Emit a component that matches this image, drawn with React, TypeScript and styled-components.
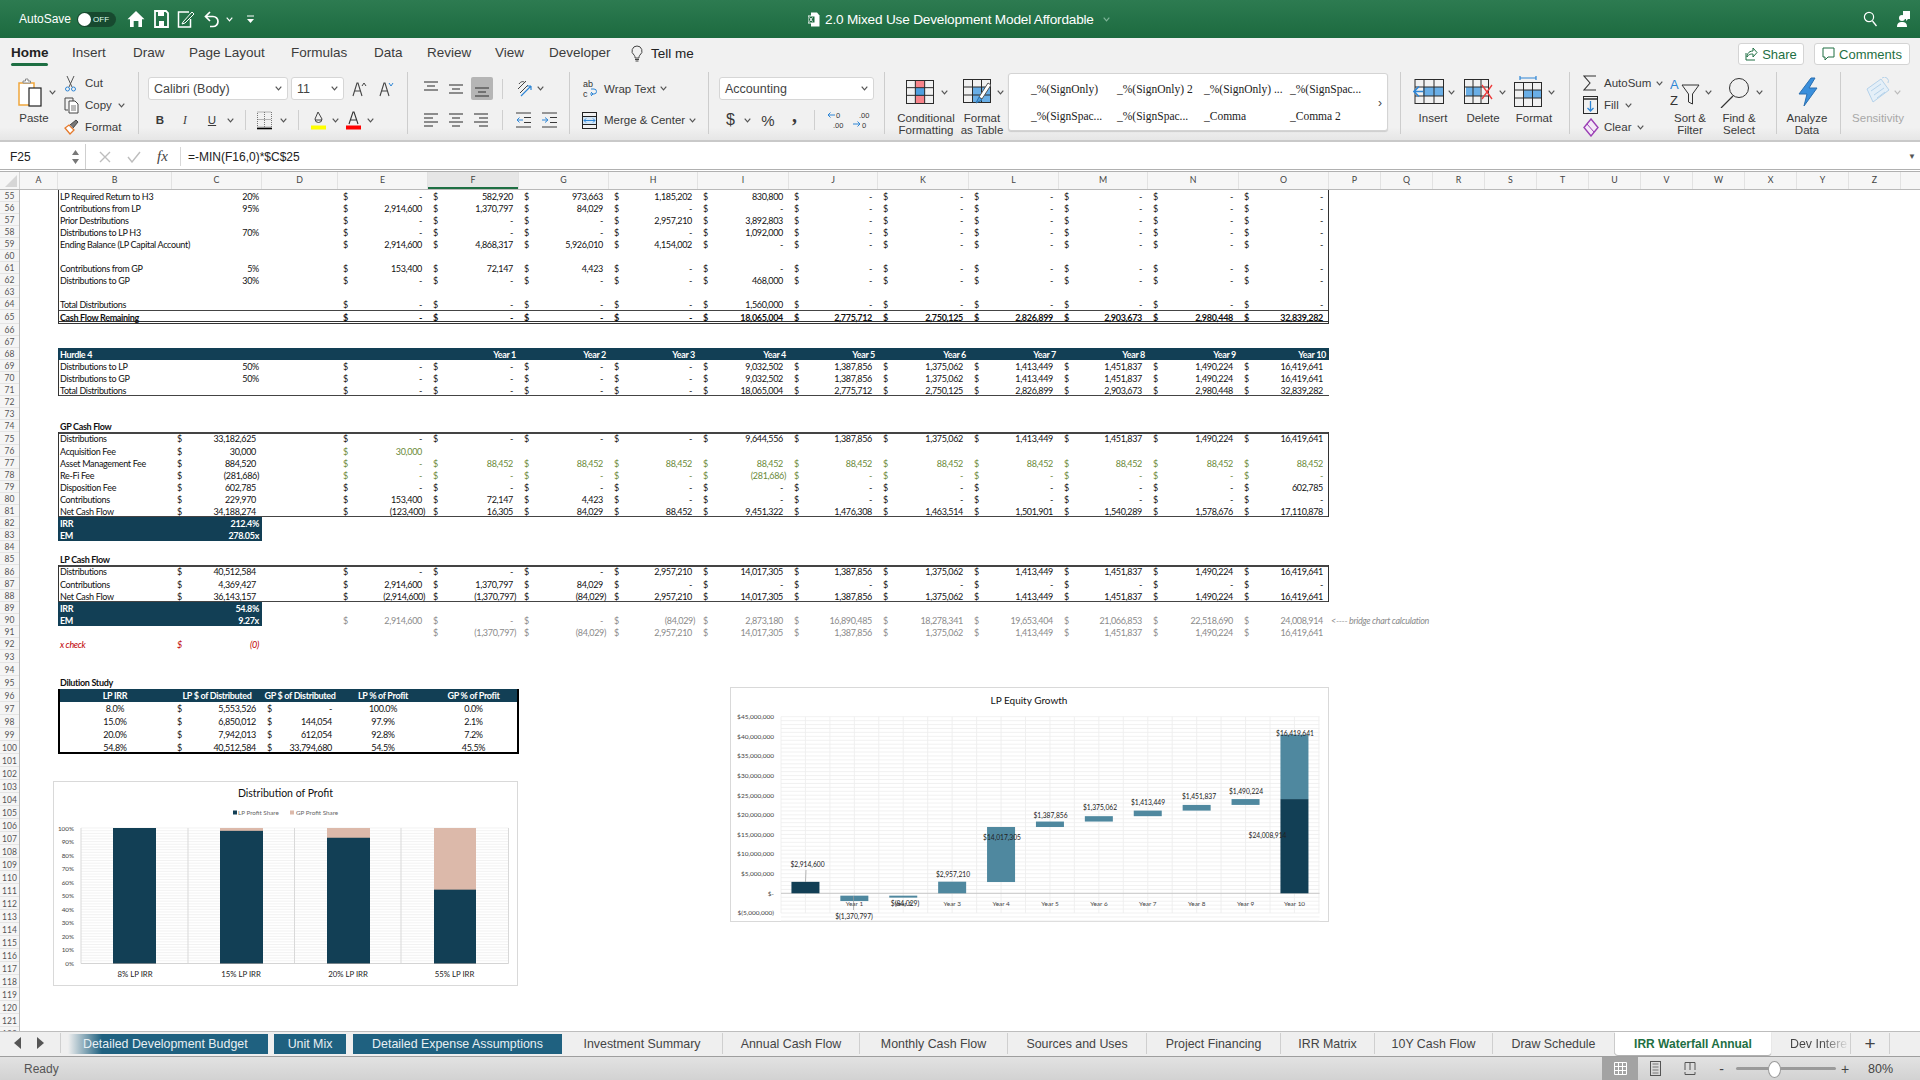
import React from 'react';
import styled, { createGlobalStyle } from 'styled-components';

const UI = '"Liberation Sans", Arial, sans-serif';
const CELL = 'Lato, "Liberation Sans", sans-serif';
const TEAL = '#123f55';
const WIDTHS = [38, 114, 90, 76, 90, 91, 90, 89, 91, 89, 91, 90, 89, 91, 90];
const ALLCOLS = WIDTHS.slice(1).map((w) => w + 'px').join(' ');
const LETTERS = 'ABCDEFGHIJKLMNOPQRSTUVWXYZ'.split('');

const Global = createGlobalStyle`
  html, body { margin: 0; padding: 0; width: 1920px; height: 1080px; overflow: hidden; background: #fff; }
  * { box-sizing: border-box; }
`;

const Page = styled.div`
  width: 1920px; height: 1080px; display: flex; flex-direction: column; overflow: hidden;
  font-family: ${UI}; color: #333; background: #fff;
`;

/* ---------- title bar ---------- */
const TitleBar = styled.div`
  height: 38px; flex: none; display: flex; align-items: center; color: #fff;
  background: linear-gradient(#2d7b51, #1c6a3f);
`;
const QuickAccess = styled.div`
  width: 808px; flex: none; display: flex; align-items: center; padding-left: 19px; font-size: 12px;
`;
const Toggle = styled.div`
  width: 39px; height: 15px; margin-left: 6px; border-radius: 8px; background: #17492f; position: relative;
  font-size: 8px; line-height: 15px; padding-left: 16px; color: #dfe;
  &::before { content: ''; position: absolute; left: 1px; top: 1px; width: 13px; height: 13px; border-radius: 50%; background: #fff; }
`;
const QuickSlot = styled.div<{ $ml: number }>`
  margin-left: ${(p) => p.$ml}px; display: flex; align-items: center;
`;
const DocTitle = styled.div`
  flex: 1; display: flex; align-items: center; gap: 5px; font-size: 13.6px; letter-spacing: -0.18px;
`;
const TitleRight = styled.div`
  display: flex; align-items: center; gap: 20px; padding-right: 9px;
`;

/* ---------- menu ---------- */
const MenuBar = styled.div`
  height: 32px; flex: none; display: flex; align-items: center; background: #f1f1f1; padding-left: 11px; font-size: 13.5px;
`;
const MenuTab = styled.div<{ $w: number; $active?: boolean }>`
  width: ${(p) => p.$w}px; flex: none; height: 100%; line-height: 30px; position: relative; white-space: nowrap;
  color: ${(p) => (p.$active ? '#222' : '#3c3c3c')}; font-weight: ${(p) => (p.$active ? 700 : 400)};
  ${(p) => p.$active && `&::after { content: ''; position: absolute; left: 0; top: 25px; width: 37px; height: 3px; border-radius: 2px; background: #1e6f43; }`}
`;
const TellMe = styled.div`
  display: flex; align-items: center; gap: 8px; height: 30px; margin-bottom: 2px; color: #222; font-weight: 500;
`;
const ShareRow = styled.div`
  margin-left: auto; display: flex; gap: 10px; padding-right: 10px;
`;
const ShareBtn = styled.div<{ $w: number }>`
  width: ${(p) => p.$w}px; height: 22px; background: #fff; border: 1px solid #d4d4d4; border-radius: 3px;
  display: flex; align-items: center; justify-content: center; gap: 4px; color: #1e6f43; font-size: 13px;
`;

/* ---------- ribbon ---------- */
const Ribbon = styled.div`
  height: 72px; flex: none; display: flex; background: linear-gradient(#f1f1f1 0%, #f1f1f1 82%, #e6e6e6 100%);
  border-bottom: 2px solid #c9c9c9;
`;
const Group = styled.div<{ $w: number; $end?: boolean }>`
  width: ${(p) => p.$w}px; height: 62px; margin-top: 2px; flex: none; display: flex;
  border-right: ${(p) => (p.$end ? 'none' : '1px solid #cdcdcd')}; font-size: 11.5px; color: #3a3a3a;
`;
const BigTool = styled.div<{ $w: number; $ml?: number }>`
  width: ${(p) => p.$w}px; margin-left: ${(p) => p.$ml ?? 0}px; flex: none; display: flex; flex-direction: column;
`;
const IconRow = styled.div<{ $pl: number }>`
  height: 40px; flex: none; padding-left: ${(p) => p.$pl}px; display: flex; align-items: center;
`;
const BigLabel = styled.div<{ $muted?: boolean }>`
  text-align: center; line-height: 12px; flex: none; white-space: nowrap; color: ${(p) => (p.$muted ? '#a8a8a8' : '#3a3a3a')};
`;
const SmallCol = styled.div<{ $ml: number; $w?: number }>`
  margin-left: ${(p) => p.$ml}px; ${(p) => p.$w && `width: ${p.$w}px;`} flex: none; display: flex; flex-direction: column;
`;
const SmallRow = styled.div`
  height: 22px; flex: none; display: flex; align-items: center; white-space: nowrap;
`;
const IconCell = styled.div<{ $w: number }>`
  width: ${(p) => p.$w}px; flex: none; display: flex; align-items: center;
`;
const Stack = styled.div<{ $pl: number }>`
  padding: 5px 0 0 ${(p) => p.$pl}px; display: flex; flex-direction: column; gap: 8px;
`;
const ToolRow = styled.div<{ $h: number }>`
  height: ${(p) => p.$h}px; flex: none; display: flex; align-items: center; white-space: nowrap;
`;
const Slot = styled.div<{ $w: number; $ml?: number; $on?: boolean }>`
  width: ${(p) => p.$w}px; margin-left: ${(p) => p.$ml ?? 0}px; flex: none; align-self: stretch;
  display: flex; align-items: center; justify-content: center; border-radius: 2px;
  ${(p) => p.$on && 'background: #b5b5b5;'}
`;
const Sep = styled.div<{ $ml: number }>`
  width: 1px; height: 20px; margin-left: ${(p) => p.$ml}px; background: #cfcfcf; flex: none;
`;
const Combo = styled.div<{ $w: number; $ml?: number }>`
  width: ${(p) => p.$w}px; height: 23px; margin-left: ${(p) => p.$ml ?? 0}px; flex: none; background: #fff;
  border: 1px solid #d6d6d6; border-radius: 3px; display: flex; align-items: center; justify-content: space-between;
  padding: 0 5px; font-size: 12.5px; color: #444;
`;
const Styles = styled.div`
  width: 380px; height: 58px; margin-top: 1px; background: #fff; border: 1px solid #d4d4d4; border-radius: 3px;
  box-shadow: 0 1px 1px #ccc; display: grid; grid-template-columns: 86px 87px 86px 1fr; grid-template-rows: 29px 26px;
  padding-left: 22px; align-items: center; position: relative; font-family: "Liberation Serif", serif; font-size: 11.5px; color: #222;
`;
const StyleNext = styled.div`
  position: absolute; right: 5px; top: 22px; font-family: ${UI}; color: #444; font-size: 12px;
`;
const DollarGlyph = styled.span`
  font-size: 16px;
`;
const PercentGlyph = styled.span`
  font-size: 15px;
`;
const CommaGlyph = styled.b`
  font-size: 20px; line-height: 10px; margin-top: -11px; font-family: "Liberation Serif", serif;
`;
const ItalicGlyph = styled.i`
  font-family: "Liberation Serif", serif;
`;

/* ---------- formula bar ---------- */
const FormulaBar = styled.div`
  height: 27px; flex: none; display: flex; align-items: center; background: #fff; font-size: 12px; color: #222; padding-top: 2px;
`;
const NameBox = styled.div`
  width: 86px; height: 100%; flex: none; display: flex; align-items: center; justify-content: space-between;
  padding: 0 6px 0 10px; border-right: 1px solid #cfcfcf;
`;
const FormulaTools = styled.div`
  width: 95px; height: 19px; flex: none; display: flex; align-items: center; gap: 16px; padding-left: 13px; border-right: 1px solid #d8d8d8;
`;
const Fx = styled.span`
  font-family: "Liberation Serif", serif; font-style: italic; font-size: 15px; color: #444;
`;
const FormulaText = styled.div`
  flex: 1; padding-left: 7px; font-size: 12px;
`;
const FormulaDrop = styled.div`
  padding-right: 4px; font-size: 8px; color: #555;
`;

/* ---------- sheet ---------- */
const Sheet = styled.div`
  height: 862px; flex: none; position: relative; overflow: hidden; border-top: 3px double #b0b0b0;
`;
const ColHeader = styled.div`
  height: 18px; display: flex; background: #f6f6f6; border-bottom: 1px solid #b9b9b9; font-family: ${CELL}; font-size: 8.8px; color: #444;
`;
const Corner = styled.div`
  width: 20px; flex: none; border-right: 1px solid #d4d4d4; position: relative;
  &::after { content: ''; position: absolute; right: 2px; bottom: 2px; border: 6px solid transparent; border-right-color: #d6d6d6; border-bottom-color: #d6d6d6; }
`;
const ColCell = styled.div<{ $w: number; $sel?: boolean }>`
  width: ${(p) => p.$w}px; flex: none; text-align: center; line-height: 16px; border-right: 1px solid #e2e2e2;
  ${(p) => p.$sel && `background: #e6e6e6; box-shadow: inset 0 -2px #1e6f43;`}
`;
const SheetRow = styled.div<{ $h: number }>`
  height: ${(p) => p.$h}px; display: flex; font-family: ${CELL}; font-size: 9px; letter-spacing: -0.33px; color: #111; white-space: nowrap;
`;
const RowNo = styled.div`
  width: 20px; flex: none; display: flex; align-items: center; justify-content: center; background: #f5f5f5; border-right: 1px solid #b9b9b9;
  box-shadow: inset 0 -1px #e4e4e4; color: #555; font-size: 8.5px; letter-spacing: 0;
`;
const Gutter = styled.div`
  width: 38px; flex: none;
`;
const rowShadow = (p: any) => {
  const s: string[] = [];
  if (p.$l) s.push('inset 1px 0 #333');
  if (p.$r) s.push('inset -1px 0 #333');
  if (p.$t === 1) s.push('inset 0 1px #444');
  if (p.$t === 2) s.push('inset 0 2px #444');
  if (p.$b === 1) s.push('inset 0 -1px #444');
  if (p.$b === 2) s.push('inset 0 -1px #333', 'inset 0 -2px #fff', 'inset 0 -3px #333');
  if (p.$bk) s.push('inset 2px 0 #000', 'inset -2px 0 #000');
  if (p.$bkb) s.push('inset 0 -2px #000');
  return s.join(', ') || 'none';
};
const Body = styled.div<any>`
  display: grid; grid-template-columns: ${(p) => p.$cols ?? ALLCOLS}; width: ${(p) => p.$width ?? 1271}px; flex: none;
  box-shadow: ${rowShadow}; ${(p) => p.$fill && `background: ${TEAL}; color: #fff; font-weight: 700;`}
`;
const CellBase = styled.div<any>`
  display: flex; align-items: center; min-width: 0; overflow: visible;
  ${(p) => p.$bold && 'font-weight: 700;'}
  ${(p) => p.$tone === 'green' && 'color: #6b8a3a;'}
  ${(p) => p.$tone === 'grey' && 'color: #8b8b8b;'}
  ${(p) => p.$tone === 'red' && 'color: #c00000; font-style: italic;'}
  ${(p) => p.$band && `background: ${TEAL}; color: #fff; font-weight: 700;`}
`;
const Label = styled(CellBase)`
  padding-left: 2px;
`;
const RightCell = styled(CellBase)`
  justify-content: flex-end; padding-right: 3px;
`;
const CenterCell = styled(CellBase)`
  justify-content: center;
`;
const Acct = styled(CellBase)`
  justify-content: space-between; padding: 0 3px 0 5px;
`;
const Amount = styled.span<{ $neg?: boolean }>`
  margin-right: ${(p) => (p.$neg ? 0 : 3)}px;
`;
const Note = styled.div`
  margin-left: 2px; display: flex; align-items: center; color: #8b8b8b; font-style: italic;
`;
const ChartFrame = styled.div<{ $x: number; $y: number; $w: number; $h: number }>`
  position: absolute; left: ${(p) => p.$x}px; top: ${(p) => p.$y}px; width: ${(p) => p.$w}px; height: ${(p) => p.$h}px;
  background: #fff; border: 1px solid #d9d9d9; font-family: ${CELL};
  svg { display: block; position: absolute; left: -1px; top: -1px; }
`;

/* ---------- tabs + status ---------- */
const TabBar = styled.div`
  height: 26px; flex: none; display: flex; background: #efefef; border-top: 1px solid #bdbdbd; border-bottom: 1px solid #9e9e9e; font-size: 12.4px; color: #444;
`;
const TabNav = styled.div`
  width: 61px; flex: none; height: 20px; margin-top: 1px; display: flex; align-items: center; gap: 16px; padding-left: 14px; border-right: 1px solid #cfcfcf;
`;
const ColorTab = styled.div<{ $w: number; $ml: number; $fade?: boolean }>`
  width: ${(p) => p.$w}px; margin: 2px 0 0 ${(p) => p.$ml}px; height: 20px; flex: none; display: flex; align-items: center; justify-content: ${(p) => (p.$fade ? 'flex-start' : 'center')}; color: #e8eff3;
  background: ${(p) => (p.$fade ? 'linear-gradient(90deg, #efefef 0, #1f6180 34px)' : '#1f6180')};
  padding-left: ${(p) => (p.$fade ? 15 : 0)}px;
`;
const PlainTab = styled.div<{ $w: number }>`
  width: ${(p) => p.$w}px; flex: none; height: 21px; margin-top: 1px; display: flex; align-items: center; justify-content: center; border-right: 1px solid #cfcfcf;
`;
const ActiveTab = styled.div<{ $w: number }>`
  width: ${(p) => p.$w}px; flex: none; height: 23px; display: flex; align-items: center; justify-content: center; background: #fff; color: #1e6f43; font-weight: 700;
  border-radius: 0 0 3px 3px; box-shadow: 0 1px 1px #aaa; font-size: 12px;
`;
const FadeTab = styled.div`
  width: 80px; flex: none; height: 21px; margin-top: 1px; display: flex; align-items: center; padding-left: 19px; border-right: 1px solid #cfcfcf;
`;
const FadeText = styled.span`
  background: linear-gradient(90deg, #444 55%, #ddd 100%); -webkit-background-clip: text; background-clip: text; color: transparent;
`;
const AddTab = styled.div`
  width: 39px; flex: none; height: 21px; margin-top: 1px; display: flex; align-items: center; justify-content: center; border-right: 1px solid #cfcfcf; font-size: 19px; color: #444;
`;
const StatusBar = styled.div`
  height: 23px; flex: none; display: flex; align-items: center; padding-left: 24px; font-size: 12px; color: #555;
  background: linear-gradient(#e2e2e2, #d2d2d2);
`;
const StatusRight = styled.div`
  margin-left: auto; height: 100%; display: flex; align-items: center;
`;
const ViewBtn = styled.div<{ $w: number; $on?: boolean }>`
  width: ${(p) => p.$w}px; height: 100%; display: flex; align-items: center; justify-content: center; ${(p) => p.$on && 'background: #a3a3a3;'}
`;
const ZoomMark = styled.div<{ $w: number }>`
  width: ${(p) => p.$w}px; text-align: center; font-size: 14px; color: #444;
`;
const Slider = styled.div`
  width: 100px; height: 3px; margin: 0 1px; background: #9a9a9a; border-radius: 2px; position: relative;
  &::after { content: ''; position: absolute; left: 32px; top: -6px; width: 11px; height: 15px; border-radius: 50%; background: #fff; border: 1px solid #999; }
`;
const Percent = styled.div`
  width: 67px; padding-left: 15px; font-size: 12.5px; color: #444;
`;

/* ---------- icons ---------- */
const B = '#2e86d6';
const K = '#2b2b2b';
const Chev = ({ ml = 4, c = '#555' }: { ml?: number; c?: string }) => (
  <svg width="7" height="5" viewBox="0 0 7 5" style={{ marginLeft: ml, flex: 'none' }}><path d="M.7.7 3.5 3.8 6.3.7" fill="none" stroke={c} strokeWidth="1.2" /></svg>
);
const Sv = ({ w, h, children }: any) => <svg width={w} height={h} viewBox={`0 0 ${w} ${h}`} fill="none" style={{ flex: 'none' }}>{children}</svg>;
const HomeI = () => <Sv w={18} h={18}><path d="M9 1 17.5 9.2H15V17h-3.6v-6H6.7v6H3V9.2H.5Z" fill="#fff" /></Sv>;
const SaveI = () => <Sv w={15} h={18}><path d="M1 1h11l2 2v14H1Z" stroke="#fff" strokeWidth="1.8" /><rect x="4" y="1" width="6" height="5" fill="#fff" /><rect x="5" y="11" width="5" height="6" fill="#fff" /></Sv>;
const EditI = () => <Sv w={18} h={18}><path d="M12 2H1.5v15h12V9" stroke="#fff" strokeWidth="1.5" /><path d="M6 12 15 2l2 2-9 9-3 1Z" fill="#1c6a3f" stroke="#fff" /></Sv>;
const UndoI = () => <Sv w={15} h={18}><path d="M6 2 1.5 6.5 6 11M1.5 6.5H9a5 5 0 0 1 0 10H6" stroke="#fff" strokeWidth="1.7" /></Sv>;
const CustomI = () => <Sv w={7} h={9}><path d="M0 1h7" stroke="#fff" /><path d="M0 4h7L3.5 8Z" fill="#fff" /></Sv>;
const DocI = () => <Sv w={12} h={15}><path d="M3 .5h6l2.5 3v11H3Z" fill="#fff" /><rect y="4" width="7" height="7" fill="#1c6a3f" stroke="#fff" /><path d="m1.5 5.5 3 4m0-4-3 4" stroke="#fff" /></Sv>;
const SearchI = () => <Sv w={14} h={16}><circle cx="6" cy="6" r="4.6" stroke="#fff" strokeWidth="1.2" /><path d="m9.5 10 4 5" stroke="#fff" strokeWidth="1.3" /></Sv>;
const PersonI = () => <Sv w={14} h={18}><path d="M6 1h7v8h-2l-2 2V9H6Z" fill="#fff" /><circle cx="5" cy="8" r="3" fill="#fff" /><path d="M0 17c0-4 2-5 5-5s5 1 5 5Z" fill="#fff" /></Sv>;
const BulbI = () => <Sv w={12} h={17}><path d="M6 1a5 5 0 0 0-3 9c1 1 1 2 1 3h4c0-1 0-2 1-3a5 5 0 0 0-3-9Z" stroke="#444" /><path d="M4 14.5h4M4.5 16h3" stroke="#444" /></Sv>;
const ShareI = () => <Sv w={13} h={14}><path d="M8 1v3C3 4 2 8 2 10 4 7 6 7 8 7v3l4-4.500Z" stroke="#1e6f43" /><path d="M1 6v7h9" stroke="#1e6f43" /></Sv>;
const CommentI = () => <Sv w={13} h={14}><path d="M1 1h11v9H6l-3 3v-3H1Z" stroke="#1e6f43" /></Sv>;
const PasteI = () => <Sv w={29} h={29}><path d="M2 5h15v22H2Z" fill="#fff" stroke="#f0a63c" strokeWidth="1.5" /><path d="M6 5V3h2.500V1h2.500v2h2.500v2Z" fill="#fff" stroke="#888" /><rect x="12" y="10" width="12" height="18" fill="#fff" stroke="#222" strokeWidth="1.2" /></Sv>;
const ScissorsI = () => <Sv w={13} h={17}><path d="M3 1l5 11M10 1 5 12" stroke="#555" /><circle cx="3.500" cy="14" r="2" stroke={B} /><circle cx="9.500" cy="14" r="2" stroke={B} /></Sv>;
const CopyI = () => <Sv w={16} h={17}><path d="M1 1h8v3M1 1v12h3" stroke="#444" /><path d="M5 4h6l3 3v9H5Z" stroke="#444" fill="#fff" /><path d="M7 9h5M7 11h5M7 13h5" stroke="#777" /></Sv>;
const BrushI = () => <Sv w={16} h={17}><path d="M1 9 6 15l4-4-5-5Z" fill="#fff" stroke="#e5792b" strokeWidth="1.3" /><path d="m6 6 6-5 2 2-5 6" fill="#777" stroke="#444" /></Sv>;
const GrowI = ({ up }: { up?: boolean }) => <Sv w={15} h={16}><path d="m1 15 4-13h1l4 13M2.500 10h6" stroke="#444" strokeWidth="1.1" /><path d={up ? 'M10 5l2-3 2 3' : 'M10 2l2 3 2-3'} stroke={up ? '#444' : B} /></Sv>;
const BorderI = () => <Sv w={15} h={19}><path d="M.5 1h14v15H.5ZM7.500 1v15M.5 8.500h14" stroke="#777" strokeDasharray="1 1" /><path d="M0 17.500h15" stroke="#000" strokeWidth="1.6" /></Sv>;
const FillI = () => <Sv w={15} h={19}><path d="m7 1 4 7a3.500 3.500 0 1 1-7 0Z" stroke="#444" /><path d="M4 9h7" stroke="#444" /><rect y="14.500" width="15" height="4" fill="#ffff00" /></Sv>;
const ColorI = () => <Sv w={15} h={19}><path d="m3 13 4-12h1l4 12M4.500 9h6" stroke="#333" strokeWidth="1.1" /><rect y="14.500" width="15" height="4" fill="#ff0000" /></Sv>;
const Lines = ({ ys, xs }: { ys: number[]; xs: [number, number][] }) => <Sv w={14} h={16}>{ys.map((y, i) => <path key={i} d={`M${xs[i][0]} ${y}H${xs[i][1]}`} stroke="#3a3a3a" strokeWidth="1.1" />)}</Sv>;
const full: [number, number][] = [[0, 14], [3, 11], [0, 14], [3, 11]];
const OrientI = () => <Sv w={17} h={19}><path d="m2 10 8-8M4 14l8-8" stroke="#444" /><path d="M3 5c2-3 5-3 6-1" stroke="#444" /><path d="M5 17 15 7m0 0h-4m4 0v4" stroke={B} strokeWidth="1.2" /></Sv>;
const IndentI = ({ right }: { right?: boolean }) => <Sv w={15} h={16}><path d="M0 1h15M0 15h15M8 5.500h7M8 10.500h7" stroke="#3a3a3a" /><path d={right ? 'M0 8h5m-2-2.500L6 8l-3 2.500' : 'M7 8H1m2.500-2.500L1 8l2.500 2.500'} stroke={B} /></Sv>;
const WrapI = () => <svg width="16" height="20" viewBox="0 0 16 20" style={{ flex: 'none' }}><text x="1" y="8" fontSize="9" fontFamily={UI} fill="#333">ab</text><text x="1" y="18" fontSize="9" fontFamily={UI} fill="#333">c</text><path d="M8 14h4a2 2 0 0 0 0-5H9m2 5-2 2m2-2-2-2" transform="translate(0 1)" stroke={B} fill="none" /></svg>;
const MergeI = () => <Sv w={15} h={17}><rect x=".5" y=".5" width="14" height="16" stroke="#222" /><path d="M.5 4.500h14M.5 12.500h14" stroke="#222" /><rect x="1" y="5" width="13" height="7" fill="#d3e6f7" /><path d="M2 8.500h11m-9-2-2 2 2 2m7-4 2 2-2 2" stroke={B} /></Sv>;
const DecI = ({ inc }: { inc?: boolean }) => <svg width="17" height="19" viewBox="0 0 17 19" style={{ flex: 'none' }}><text x={inc ? 6 : 9} y="7" fontSize="7.500" fontFamily={UI} fill="#333">{inc ? '.00' : '0'}</text><text x={inc ? 9 : 6} y="17" fontSize="7.500" fontFamily={UI} fill="#333">{inc ? '0' : '.00'}</text><path d={inc ? 'M0 13h7m-2.500-2.500L7 13l-2.500 2.500' : 'M8 4H1m2.500-2.500L1 4l2.500 2.500'} stroke={B} fill="none" /></svg>;
const Table = ({ w = 30, h = 23, children }: any) => (
  <Sv w={w} h={h + 1}>
    {children}
    <rect x=".5" y=".5" width={w - 1} height={h} stroke={K} />
    <path d={`M${w / 3} 0v${h}M${(2 * w) / 3} 0v${h}M0 ${h / 3}h${w}M0 ${(2 * h) / 3}h${w}`} stroke={K} />
  </Sv>
);
const CondI = () => <Table w={28}><rect x="9" y="0" width="10" height="8" fill="#f7838a" /><rect x="9" y="8" width="10" height="8" fill="#4e9fe0" /><rect x="9" y="16" width="10" height="8" fill="#f7838a" /></Table>;
const FmtTableI = () => <Sv w={28} h={26}><rect x="10" y="8" width="18" height="16" fill="#69aee6" /><rect x=".5" y=".5" width="27" height="23" stroke={K} /><path d="M9.500 0v24M18.500 0v24M0 8h28M0 16h28" stroke={K} /><path d="m25 4-9 14 3 2 9-14Z" fill="#fff" stroke="#555" /><path d="m16 18-3 6 6-3Z" fill="#4e9fe0" stroke="#2a6fa8" /></Sv>;
const InsertI = () => <Sv w={31} h={26}><rect x="10" y="8" width="21" height="9" fill="#69aee6" /><rect x="2" y=".5" width="28.500" height="24" stroke={K} /><path d="M11 0v25M21 0v25M2 8h29M2 17h29" stroke={K} /><path d="M10 12.500H2m4-5-5 5 5 5" stroke={B} strokeWidth="1.6" /></Sv>;
const DeleteI = () => <Sv w={30} h={26}><rect x="2" y="8" width="14" height="9" fill="#69aee6" /><rect x=".5" y=".5" width="24" height="24" stroke={K} /><path d="M9 0v25M17 0v25M0 8h25M0 17h25" stroke={K} /><path d="m18 6 10 14m0-14L18 20" stroke="#ee3b3b" strokeWidth="1.3" /></Sv>;
const FormatI = () => <Sv w={28} h={32}><path d="M6 2h16M6 0v4M22 0v4" stroke={B} strokeWidth="1.2" /><rect x="10" y="14" width="18" height="8" fill="#69aee6" /><rect x=".5" y="6.500" width="27" height="24" stroke={K} /><path d="M9.500 6v25M18.500 6v25M0 14h28M0 22h28" stroke={K} /></Sv>;
const SigmaI = () => <Sv w={14} h={16}><path d="M13 1H1l6 7-6 7h12" stroke="#333" strokeWidth="1.1" /></Sv>;
const FillDownI = () => <Sv w={15} h={18}><rect x=".5" y=".5" width="14" height="17" stroke={K} /><path d="M0 3h15" stroke={K} strokeWidth="1.500" /><path d="M7.500 5v10m-3-3 3 3 3-3" stroke={B} strokeWidth="1.3" /></Sv>;
const EraserI = () => <Sv w={16} h={19}><path d="M8 1 15 9.500 8 18 1 9.500Z" fill="#f4e9f7" stroke="#9b3fb5" strokeWidth="1.4" /><path d="M4 6 11 14" stroke="#9b3fb5" /></Sv>;
const SortI = () => <svg width="30" height="29" viewBox="0 0 30 29" style={{ flex: 'none' }}><text x="0" y="11" fontSize="13" fontFamily={UI} fill={B}>A</text><text x="0" y="27" fontSize="13" fontFamily={UI} fill="#333">Z</text><path d="M12 7h17l-6.500 9v10l-4-2v-8Z" fill="none" stroke="#333" /></svg>;
const FindI = () => <Sv w={30} h={31}><circle cx="19" cy="11" r="9.500" stroke="#333" /><path d="M13 19 1 31" stroke="#333" strokeWidth="1.2" /></Sv>;
const BoltI = () => <Sv w={20} h={30}><path d="M13 1 1 17h8L6 29 19 11h-8l6-10Z" fill="#3a8fdc" stroke="#2a6fb0" /></Sv>;
const SensI = () => <Sv w={28} h={30}><path d="M4 12 18 2l8 11-16 12Z" fill="#e4eff8" stroke="#b5d2ea" /><path d="m8 14 10-7M11 18l10-7M14 21l8-6" stroke="#b5d2ea" /><path d="M19 1a4 4 0 0 1 6 5" stroke="#b5d2ea" /></Sv>;
const Spin = () => <Sv w={7} h={16}><path d="M3.500 1 7 6H0ZM3.500 15 7 10H0Z" fill="#777" /></Sv>;
const X = () => <Sv w={12} h={12}><path d="m1 1 10 10m0-10L1 11" stroke="#bdbdbd" strokeWidth="1.4" /></Sv>;
const Check = () => <Sv w={14} h={12}><path d="m1 6 4 5 8-10" stroke="#bdbdbd" strokeWidth="1.4" /></Sv>;
const ArrowL = ({ right }: { right?: boolean }) => <Sv w={7} h={12}><path d={right ? 'M0 0l7 6-7 6Z' : 'M7 0 0 6l7 6Z'} fill="#555" /></Sv>;
const GridV = () => <Sv w={13} h={13}><path d="M.5.5h12v12H.5ZM4.500 0v13M8.500 0v13M0 4.500h13M0 8.500h13" stroke="#fff" /></Sv>;
const PageV = () => <Sv w={11} h={15}><rect x=".5" y=".5" width="10" height="14" stroke="#555" /><path d="M2.500 3h6M2.500 6h6M2.500 9h6M2.500 12h6" stroke="#777" /></Sv>;
const BreakV = () => <Sv w={12} h={13}><path d="M1 8V.5h10V8M1 12.500V10m10 2.500V10M1 12.500h10M6 .5V8" stroke="#555" /></Sv>;

/* ---------- charts ---------- */
const range = (n: number) => Array.from({ length: n }, (_, i) => i);

const ProfitChart = () => {
  const top = 47, bot = 182.5, h = bot - top;
  const bars = [[60, 43, 100], [167, 43, 97.9], [274, 43, 92.8], [381, 42, 54.5]];
  return (
    <svg width="465" height="205" viewBox="0 0 465 205">
      {range(51).map((i) => <line key={i} x1="28" x2="455.500" y1={top + (h * i) / 50} y2={top + (h * i) / 50} stroke="#ececec" strokeWidth=".7" />)}
      {[28, 135, 241.500, 348, 455.500].map((x) => <line key={x} x1={x} x2={x} y1={top} y2={bot} stroke="#d9d9d9" strokeWidth="1" />)}
      <line x1="28" x2="455.500" y1={bot} y2={bot} stroke="#d4d4d4" />
      {bars.map(([x, w, v]) => (
        <g key={x}>
          <rect x={x} y={top} width={w} height={h} fill="#dcb9aa" />
          <rect x={x} y={bot - (h * v) / 100} width={w} height={(h * v) / 100} fill={TEAL} />
        </g>
      ))}
      {range(11).map((i) => <text key={i} x="21" y={bot - (h * i) / 10 + 2.500} textAnchor="end" fontSize="6.300" fill="#444">{i * 10}%</text>)}
      {['8% LP IRR', '15% LP IRR', '20% LP IRR', '55% LP IRR'].map((t, i) => <text key={t} x={[82, 188, 295, 401.500][i]} y="195.500" textAnchor="middle" fontSize="7.800" fill="#222">{t}</text>)}
      <text x="232.500" y="16" textAnchor="middle" fontSize="10.500" fill="#111">Distribution of Profit</text>
      <rect x="180" y="29.500" width="4" height="4" fill={TEAL} />
      <text x="185" y="34" fontSize="6.300" fill="#666">LP Profit Share</text>
      <rect x="237" y="29.500" width="4" height="4" fill="#dcb9aa" />
      <text x="243" y="34" fontSize="6.300" fill="#666">GP Profit Share</text>
    </svg>
  );
};

const EquityChart = () => {
  const x0 = 51, cat = 48.9, bw = 28, y0 = 206.3, k = 3.925, right = 589.5;
  const Y = (m: number) => y0 - m * k;
  const bars: [number, number, number, string][] = [
    [0, 0, 2.915, TEAL], [1, -0.6, -1.37 - 0.6, '#4f889f'], [2, -0.6, -1.1, '#4f889f'], [3, 0, 2.957, '#4f889f'], [4, 2.87, 16.89, '#4f889f'],
    [5, 16.89, 18.28, '#4f889f'], [6, 18.28, 19.65, '#4f889f'], [7, 19.65, 21.07, '#4f889f'], [8, 21.07, 22.52, '#4f889f'], [9, 22.52, 24.01, '#4f889f'],
    [10, 0, 24.01, TEAL], [10, 24.01, 40.43, '#4f889f'],
  ];
  const labels: [string, number, number][] = [
    ['$2,914,600', 77.500, 180], ['$(1,370,797)', 124, 232], ['$(84,029)', 175, 218.500], ['$2,957,210', 223, 190],
    ['$14,017,305', 272, 153], ['$1,387,856', 320.500, 131], ['$1,375,062', 370, 123], ['$1,413,449', 418, 118],
    ['$1,451,837', 469, 112], ['$1,490,224', 516, 107], ['$16,419,641', 565, 49], ['$24,008,914', 537.500, 150.500],
  ];
  const axis = ['$45,000,000', '$40,000,000', '$35,000,000', '$30,000,000', '$25,000,000', '$20,000,000', '$15,000,000', '$10,000,000', '$5,000,000', '$-', '$(5,000,000)'];
  return (
    <svg width="599" height="235" viewBox="0 0 599 235">
      {range(56).map((i) => <line key={i} x1={x0} x2={right} y1={29.700 + (i * 19.63) / 5} y2={29.700 + (i * 19.63) / 5} stroke="#eee" strokeWidth=".8" />)}
      {range(23).map((i) => <line key={i} x1={x0 + (i * cat) / 2} x2={x0 + (i * cat) / 2} y1="29.700" y2="226" stroke="#eee" strokeWidth=".9" />)}
      <line x1={x0} x2={right} y1={y0} y2={y0} stroke="#c9c9c9" />
      {bars.map(([i, a, b, c], n) => <rect key={n} x={x0 + i * cat + (cat - bw) / 2} y={Math.min(Y(a), Y(b))} width={bw} height={Math.abs(Y(a) - Y(b))} fill={c} />)}
      <line x1="76" x2="75.500" y1="183" y2="195" stroke="#999" strokeWidth=".7" />
      <line x1="123.500" x2="123.500" y1="209" y2="223" stroke="#999" strokeWidth=".7" />
      {range(10).map((i) => <text key={i} x={124.400 + i * cat} y="218.500" textAnchor="middle" fontSize="6.400" fill="#444">Year {i + 1}</text>)}
      {axis.map((t, i) => <text key={t} x="44" y={32 + i * 19.63} textAnchor="end" fontSize="6.500" fill="#444">{t}</text>)}
      {labels.map(([t, x, y]) => <text key={t} x={x} y={y} textAnchor="middle" fontSize="6.700" fill="#222">{t}</text>)}
      <text x="299" y="16.500" textAnchor="middle" fontSize="10" fill="#111">LP Equity Growth</text>
    </svg>
  );
};

/* ---------- data ---------- */
const v = (s: string) => {
  const a = s.split(' ').filter(Boolean);
  while (a.length < 11) a.push('-');
  return a;
};
const TAIL = '1,387,856 1,375,062 1,413,449 1,451,837 1,490,224 16,419,641';
const SUMT = '2,775,712 2,750,125 2,826,899 2,903,673 2,980,448 32,839,282';
type R = { n: number; h?: number; label?: string; bold?: boolean; pct?: string; acct?: string; vals?: string[]; tone?: string; box?: any; kind?: string; note?: string; big?: string; cells?: string[] };
const box = { $l: true, $r: true };
const rows: R[] = [
  { n: 55, box, label: 'LP Required Return to H3', pct: '20%', vals: v('- 582,920 973,663 1,185,202 830,800') },
  { n: 56, box, label: 'Contributions from LP', pct: '95%', vals: v('2,914,600 1,370,797 84,029') },
  { n: 57, box, label: 'Prior Destributions', vals: v('- - - 2,957,210 3,892,803') },
  { n: 58, box, label: 'Distributions to LP H3', pct: '70%', vals: v('- - - - 1,092,000') },
  { n: 59, box, label: 'Ending Balance (LP Capital Account)', vals: v('2,914,600 4,868,317 5,926,010 4,154,002') },
  { n: 60, box },
  { n: 61, box, label: 'Contributions from GP', pct: '5%', vals: v('153,400 72,147 4,423') },
  { n: 62, box, label: 'Distributions to GP', pct: '30%', vals: v('- - - - 468,000') },
  { n: 63, box },
  { n: 64, box, label: 'Total Distributions', vals: v('- - - - 1,560,000') },
  { n: 65, h: 14, box: { ...box, $t: 1, $b: 2 }, label: 'Cash Flow Remaining', bold: true, vals: v('- - - - 18,065,004 ' + SUMT) },
  { n: 66 }, { n: 67 },
  { n: 68, kind: 'hurdle', label: 'Hurdle 4' },
  { n: 69, box: { $l: true }, label: 'Distributions to LP', pct: '50%', vals: v('- - - - 9,032,502 ' + TAIL) },
  { n: 70, box: { $l: true }, label: 'Distributions to GP', pct: '50%', vals: v('- - - - 9,032,502 ' + TAIL) },
  { n: 71, box: { $l: true, $b: 1 }, label: 'Total Distributions', vals: v('- - - - 18,065,004 ' + SUMT) },
  { n: 72 }, { n: 73 },
  { n: 74, label: 'GP Cash Flow', bold: true },
  { n: 75, h: 13, box: { ...box, $t: 2 }, label: 'Distributions', acct: '33,182,625', vals: v('- - - - 9,644,556 ' + TAIL) },
  { n: 76, box, label: 'Acquisition Fee', acct: '30,000', tone: 'green', vals: ['30,000', ...'__________'.split('')] },
  { n: 77, box, label: 'Asset Management Fee', acct: '884,520', tone: 'green', vals: v('- 88,452 88,452 88,452 88,452 88,452 88,452 88,452 88,452 88,452 88,452') },
  { n: 78, box, label: 'Re-Fi Fee', acct: '(281,686)', tone: 'green', vals: v('- - - - (281,686)') },
  { n: 79, box, label: 'Disposition Fee', acct: '602,785', vals: v('- - - - - - - - - - 602,785') },
  { n: 80, box, label: 'Contributions', acct: '229,970', vals: v('153,400 72,147 4,423') },
  { n: 81, box: { ...box, $b: 1 }, label: 'Net Cash Flow', acct: '34,188,274', vals: v('(123,400) 16,305 84,029 88,452 9,451,322 1,476,308 1,463,514 1,501,901 1,540,289 1,578,676 17,110,878') },
  { n: 82, kind: 'band', label: 'IRR', big: '212.4%' },
  { n: 83, kind: 'band', label: 'EM', big: '278.05x' },
  { n: 84 },
  { n: 85, label: 'LP Cash Flow', bold: true },
  { n: 86, h: 13, box: { ...box, $t: 2 }, label: 'Distributions', acct: '40,512,584', vals: v('- - - 2,957,210 14,017,305 ' + TAIL) },
  { n: 87, box, label: 'Contributions', acct: '4,369,427', vals: v('2,914,600 1,370,797 84,029') },
  { n: 88, box: { ...box, $b: 1 }, label: 'Net Cash Flow', acct: '36,143,157', vals: v('(2,914,600) (1,370,797) (84,029) 2,957,210 14,017,305 ' + TAIL) },
  { n: 89, kind: 'band', label: 'IRR', big: '54.8%' },
  { n: 90, kind: 'band', label: 'EM', big: '9.27x', tone: 'grey', vals: v('2,914,600 - - (84,029) 2,873,180 16,890,485 18,278,341 19,653,404 21,066,853 22,518,690 24,008,914'), note: '<---- bridge chart calculation' },
  { n: 91, tone: 'grey', vals: v('_ (1,370,797) (84,029) 2,957,210 14,017,305 ' + TAIL) },
  { n: 92, label: 'x check', kind: 'check' },
  { n: 93, h: 13 }, { n: 94, h: 13 },
  { n: 95, h: 13, label: 'Dilution Study', bold: true },
  { n: 96, h: 13, kind: 'dilhead' },
  { n: 97, h: 13, kind: 'dil', cells: ['8.0%', '5,553,526', '-', '100.0%', '0.0%'] },
  { n: 98, h: 13, kind: 'dil', cells: ['15.0%', '6,850,012', '144,054', '97.9%', '2.1%'] },
  { n: 99, h: 13, kind: 'dil', cells: ['20.0%', '7,942,013', '612,054', '92.8%', '7.2%'] },
  { n: 100, h: 13, kind: 'dil', cells: ['54.8%', '40,512,584', '33,794,680', '54.5%', '45.5%'] },
  ...range(22).map((i) => ({ n: 101 + i, h: 13 })),
];

const Money = ({ value, tone, bold, band }: any) => {
  if (value === '_') return <span />;
  const neg = value.startsWith('(');
  return (
    <Acct $tone={tone} $bold={bold} $band={band}>
      <span>$</span>
      <Amount $neg={neg}>{value}</Amount>
    </Acct>
  );
};

const DIL_COLS = '114px 90px 76px 90px 91px';

const RowContent = ({ r }: { r: R }) => {
  if (r.kind === 'hurdle') {
    return (
      <Body $fill>
        <Label>{r.label}</Label><span /><span /><span />
        {range(10).map((i) => <RightCell key={i}>Year {i + 1}</RightCell>)}
      </Body>
    );
  }
  if (r.kind === 'dilhead') {
    return (
      <Body $fill $cols={DIL_COLS} $width={461} $bk>
        <CenterCell>LP IRR</CenterCell><CenterCell>LP $ of Distributed</CenterCell><CenterCell>GP $ of Distributed</CenterCell><CenterCell>LP % of Profit</CenterCell><CenterCell>GP % of Profit</CenterCell>
      </Body>
    );
  }
  if (r.kind === 'dil') {
    const c = r.cells as string[];
    return (
      <Body $cols={DIL_COLS} $width={461} $bk $bkb={r.n === 100}>
        <CenterCell>{c[0]}</CenterCell><Money value={c[1]} /><Money value={c[2]} /><CenterCell>{c[3]}</CenterCell><CenterCell>{c[4]}</CenterCell>
      </Body>
    );
  }
  if (r.kind === 'check') {
    return (
      <Body>
        <Label $tone="red">{r.label}</Label>
        <Acct $tone="red"><span>$</span><Amount $neg>(0)</Amount></Acct>
      </Body>
    );
  }
  const band = r.kind === 'band';
  return (
    <>
      <Body {...(r.box || {})}>
        <Label $bold={r.bold} $band={band}>{r.label}</Label>
        {r.pct ? <RightCell>{r.pct}</RightCell> : r.acct ? <Money value={r.acct} /> : band ? <RightCell $band>{r.big}</RightCell> : <span />}
        {r.vals && <span />}
        {r.vals && r.vals.map((x, i) => <Money key={i} value={x} tone={r.tone} bold={r.bold} />)}
      </Body>
      {r.note && <Note>{r.note}</Note>}
    </>
  );
};

export default function App() {
  return (
    <Page>
      <Global />
      <TitleBar>
        <QuickAccess>
          AutoSave
          <Toggle>OFF</Toggle>
          <QuickSlot $ml={11}><HomeI /></QuickSlot>
          <QuickSlot $ml={9}><SaveI /></QuickSlot>
          <QuickSlot $ml={8}><EditI /></QuickSlot>
          <QuickSlot $ml={9}><UndoI /></QuickSlot>
          <QuickSlot $ml={3}><Chev c="#fff" /></QuickSlot>
          <QuickSlot $ml={14}><CustomI /></QuickSlot>
        </QuickAccess>
        <DocTitle><DocI /> 2.0 Mixed Use Development Model Affordable <Chev c="#7fb598" /></DocTitle>
        <TitleRight><SearchI /><PersonI /></TitleRight>
      </TitleBar>

      <MenuBar>
        <MenuTab $w={61} $active>Home</MenuTab>
        <MenuTab $w={61}>Insert</MenuTab>
        <MenuTab $w={56}>Draw</MenuTab>
        <MenuTab $w={102}>Page Layout</MenuTab>
        <MenuTab $w={83}>Formulas</MenuTab>
        <MenuTab $w={53}>Data</MenuTab>
        <MenuTab $w={68}>Review</MenuTab>
        <MenuTab $w={54}>View</MenuTab>
        <MenuTab $w={82}>Developer</MenuTab>
        <TellMe><BulbI /> Tell me</TellMe>
        <ShareRow>
          <ShareBtn $w={66}><ShareI />Share</ShareBtn>
          <ShareBtn $w={96}><CommentI />Comments</ShareBtn>
        </ShareRow>
      </MenuBar>

      <Ribbon>
        <Group $w={139}>
          <BigTool $w={52} $ml={8}>
            <IconRow $pl={9}><PasteI /><Chev ml={3} /></IconRow>
            <BigLabel>Paste</BigLabel>
          </BigTool>
          <SmallCol $ml={4}>
            <SmallRow><IconCell $w={21}><ScissorsI /></IconCell>Cut</SmallRow>
            <SmallRow><IconCell $w={21}><CopyI /></IconCell>Copy<Chev ml={6} /></SmallRow>
            <SmallRow><IconCell $w={21}><BrushI /></IconCell>Format</SmallRow>
          </SmallCol>
        </Group>

        <Group $w={269}>
          <Stack $pl={9}>
            <ToolRow $h={23}>
              <Combo $w={140}>Calibri (Body)<Chev /></Combo>
              <Combo $w={53} $ml={3}>11<Chev /></Combo>
              <Slot $w={15} $ml={8}><GrowI up /></Slot>
              <Slot $w={15} $ml={12}><GrowI /></Slot>
            </ToolRow>
            <ToolRow $h={24}>
              <Slot $w={24}><b>B</b></Slot>
              <Slot $w={26}><ItalicGlyph>I</ItalicGlyph></Slot>
              <Slot $w={28}><u>U</u></Slot>
              <Chev ml={1} />
              <Sep $ml={11} />
              <Slot $w={15} $ml={11}><BorderI /></Slot>
              <Chev ml={8} />
              <Sep $ml={11} />
              <Slot $w={15} $ml={12}><FillI /></Slot>
              <Chev ml={6} />
              <Slot $w={15} $ml={7}><ColorI /></Slot>
              <Chev ml={6} />
            </ToolRow>
          </Stack>
        </Group>

        <Group $w={162}>
          <Stack $pl={16}>
            <ToolRow $h={23}>
              <Slot $w={13}><Lines ys={[1, 5, 9]} xs={full} /></Slot>
              <Slot $w={13} $ml={12}><Lines ys={[4, 8, 12]} xs={full} /></Slot>
              <Slot $w={22} $ml={9} $on><Lines ys={[7, 11, 15]} xs={full} /></Slot>
              <Sep $ml={9} />
              <Slot $w={17} $ml={13}><OrientI /></Slot>
              <Chev ml={4} />
            </ToolRow>
            <ToolRow $h={24}>
              <Slot $w={13}><Lines ys={[2, 6, 10, 14]} xs={[[0, 14], [0, 9], [0, 14], [0, 9]]} /></Slot>
              <Slot $w={13} $ml={12}><Lines ys={[2, 6, 10, 14]} xs={[[0, 14], [3, 11], [0, 14], [3, 11]]} /></Slot>
              <Slot $w={14} $ml={12}><Lines ys={[2, 6, 10, 14]} xs={[[0, 14], [5, 14], [0, 14], [5, 14]]} /></Slot>
              <Sep $ml={14} />
              <Slot $w={14} $ml={13}><IndentI /></Slot>
              <Slot $w={14} $ml={12}><IndentI right /></Slot>
            </ToolRow>
          </Stack>
        </Group>

        <Group $w={139}>
          <Stack $pl={12}>
            <ToolRow $h={23}><IconCell $w={22}><WrapI /></IconCell>Wrap Text<Chev ml={5} /></ToolRow>
            <ToolRow $h={24}><IconCell $w={22}><MergeI /></IconCell>Merge &amp; Center<Chev ml={4} /></ToolRow>
          </Stack>
        </Group>

        <Group $w={176}>
          <Stack $pl={10}>
            <ToolRow $h={23}><Combo $w={155}>Accounting<Chev /></Combo></ToolRow>
            <ToolRow $h={24}>
              <Slot $w={9} $ml={7}><DollarGlyph>$</DollarGlyph></Slot>
              <Chev ml={9} />
              <Slot $w={14} $ml={10}><PercentGlyph>%</PercentGlyph></Slot>
              <Slot $w={9} $ml={15}><CommaGlyph>,</CommaGlyph></Slot>
              <Sep $ml={15} />
              <Slot $w={17} $ml={12}><DecI /></Slot>
              <Slot $w={17} $ml={9}><DecI inc /></Slot>
            </ToolRow>
          </Stack>
        </Group>

        <Group $w={516}>
          <BigTool $w={60} $ml={11}>
            <IconRow $pl={10}><CondI /><Chev ml={7} /></IconRow>
            <BigLabel>Conditional</BigLabel><BigLabel>Formatting</BigLabel>
          </BigTool>
          <BigTool $w={52}>
            <IconRow $pl={7}><FmtTableI /><Chev ml={6} /></IconRow>
            <BigLabel>Format</BigLabel><BigLabel>as Table</BigLabel>
          </BigTool>
          <Styles>
            <span>_%(SignOnly)</span><span>_%(SignOnly) 2</span><span>_%(SignOnly) ...</span><span>_%(SignSpac...</span>
            <span>_%(SignSpac...</span><span>_%(SignSpac...</span><span>_Comma</span><span>_Comma 2</span>
            <StyleNext>›</StyleNext>
          </Styles>
        </Group>

        <Group $w={169}>
          <BigTool $w={52} $ml={6}>
            <IconRow $pl={6}><InsertI /><Chev ml={4} /></IconRow>
            <BigLabel>Insert</BigLabel>
          </BigTool>
          <BigTool $w={48}>
            <IconRow $pl={5}><DeleteI /><Chev ml={5} /></IconRow>
            <BigLabel>Delete</BigLabel>
          </BigTool>
          <BigTool $w={54}>
            <IconRow $pl={7}><FormatI /><Chev ml={6} /></IconRow>
            <BigLabel>Format</BigLabel>
          </BigTool>
        </Group>

        <Group $w={207}>
          <SmallCol $ml={13} $w={81}>
            <SmallRow><IconCell $w={21}><SigmaI /></IconCell>AutoSum<Chev ml={5} /></SmallRow>
            <SmallRow><IconCell $w={21}><FillDownI /></IconCell>Fill<Chev ml={6} /></SmallRow>
            <SmallRow><IconCell $w={21}><EraserI /></IconCell>Clear<Chev ml={6} /></SmallRow>
          </SmallCol>
          <BigTool $w={52}>
            <IconRow $pl={6}><SortI /><Chev ml={5} /></IconRow>
            <BigLabel>Sort &amp;</BigLabel><BigLabel>Filter</BigLabel>
          </BigTool>
          <BigTool $w={46}>
            <IconRow $pl={4}><FindI /><Chev ml={6} /></IconRow>
            <BigLabel>Find &amp;</BigLabel><BigLabel>Select</BigLabel>
          </BigTool>
        </Group>

        <Group $w={64}>
          <BigTool $w={60}>
            <IconRow $pl={21}><BoltI /></IconRow>
            <BigLabel>Analyze</BigLabel><BigLabel>Data</BigLabel>
          </BigTool>
        </Group>

        <Group $w={79} $end>
          <BigTool $w={60} $ml={7}>
            <IconRow $pl={15}><SensI /><Chev ml={3} c="#bbb" /></IconRow>
            <BigLabel $muted>Sensitivity</BigLabel>
          </BigTool>
        </Group>
      </Ribbon>

      <FormulaBar>
        <NameBox>F25<Spin /></NameBox>
        <FormulaTools><X /><Check /><Fx>fx</Fx></FormulaTools>
        <FormulaText>=-MIN(F16,0)*$C$25</FormulaText>
        <FormulaDrop>▼</FormulaDrop>
      </FormulaBar>

      <Sheet>
        <ColHeader>
          <Corner />
          {LETTERS.map((l, i) => (
            <ColCell key={l} $w={i < 15 ? WIDTHS[i] : 52} $sel={l === 'F'}>{l}</ColCell>
          ))}
        </ColHeader>
        {rows.map((r) => (
          <SheetRow key={r.n} $h={r.h ?? 12}>
            <RowNo>{r.n}</RowNo>
            <Gutter />
            <RowContent r={r} />
          </SheetRow>
        ))}
        <ChartFrame $x={53} $y={609} $w={465} $h={205}><ProfitChart /></ChartFrame>
        <ChartFrame $x={730} $y={515} $w={599} $h={235}><EquityChart /></ChartFrame>
      </Sheet>

      <TabBar>
        <TabNav><ArrowL /><ArrowL right /></TabNav>
        <ColorTab $w={200} $ml={7} $fade>Detailed Development Budget</ColorTab>
        <ColorTab $w={72} $ml={6}>Unit Mix</ColorTab>
        <ColorTab $w={209} $ml={7}>Detailed Expense Assumptions</ColorTab>
        <PlainTab $w={161}>Investment Summary</PlainTab>
        <PlainTab $w={137}>Annual Cash Flow</PlainTab>
        <PlainTab $w={148}>Monthly Cash Flow</PlainTab>
        <PlainTab $w={139}>Sources and Uses</PlainTab>
        <PlainTab $w={134}>Project Financing</PlainTab>
        <PlainTab $w={94}>IRR Matrix</PlainTab>
        <PlainTab $w={118}>10Y Cash Flow</PlainTab>
        <PlainTab $w={122}>Draw Schedule</PlainTab>
        <ActiveTab $w={156}>IRR Waterfall Annual</ActiveTab>
        <FadeTab><FadeText>Dev Intere</FadeText></FadeTab>
        <AddTab>+</AddTab>
      </TabBar>

      <StatusBar>
        Ready
        <StatusRight>
          <ViewBtn $w={36} $on><GridV /></ViewBtn>
          <ViewBtn $w={34}><PageV /></ViewBtn>
          <ViewBtn $w={36}><BreakV /></ViewBtn>
          <ZoomMark $w={27}>-</ZoomMark>
          <Slider />
          <ZoomMark $w={16}>+</ZoomMark>
          <Percent>80%</Percent>
        </StatusRight>
      </StatusBar>
    </Page>
  );
}
